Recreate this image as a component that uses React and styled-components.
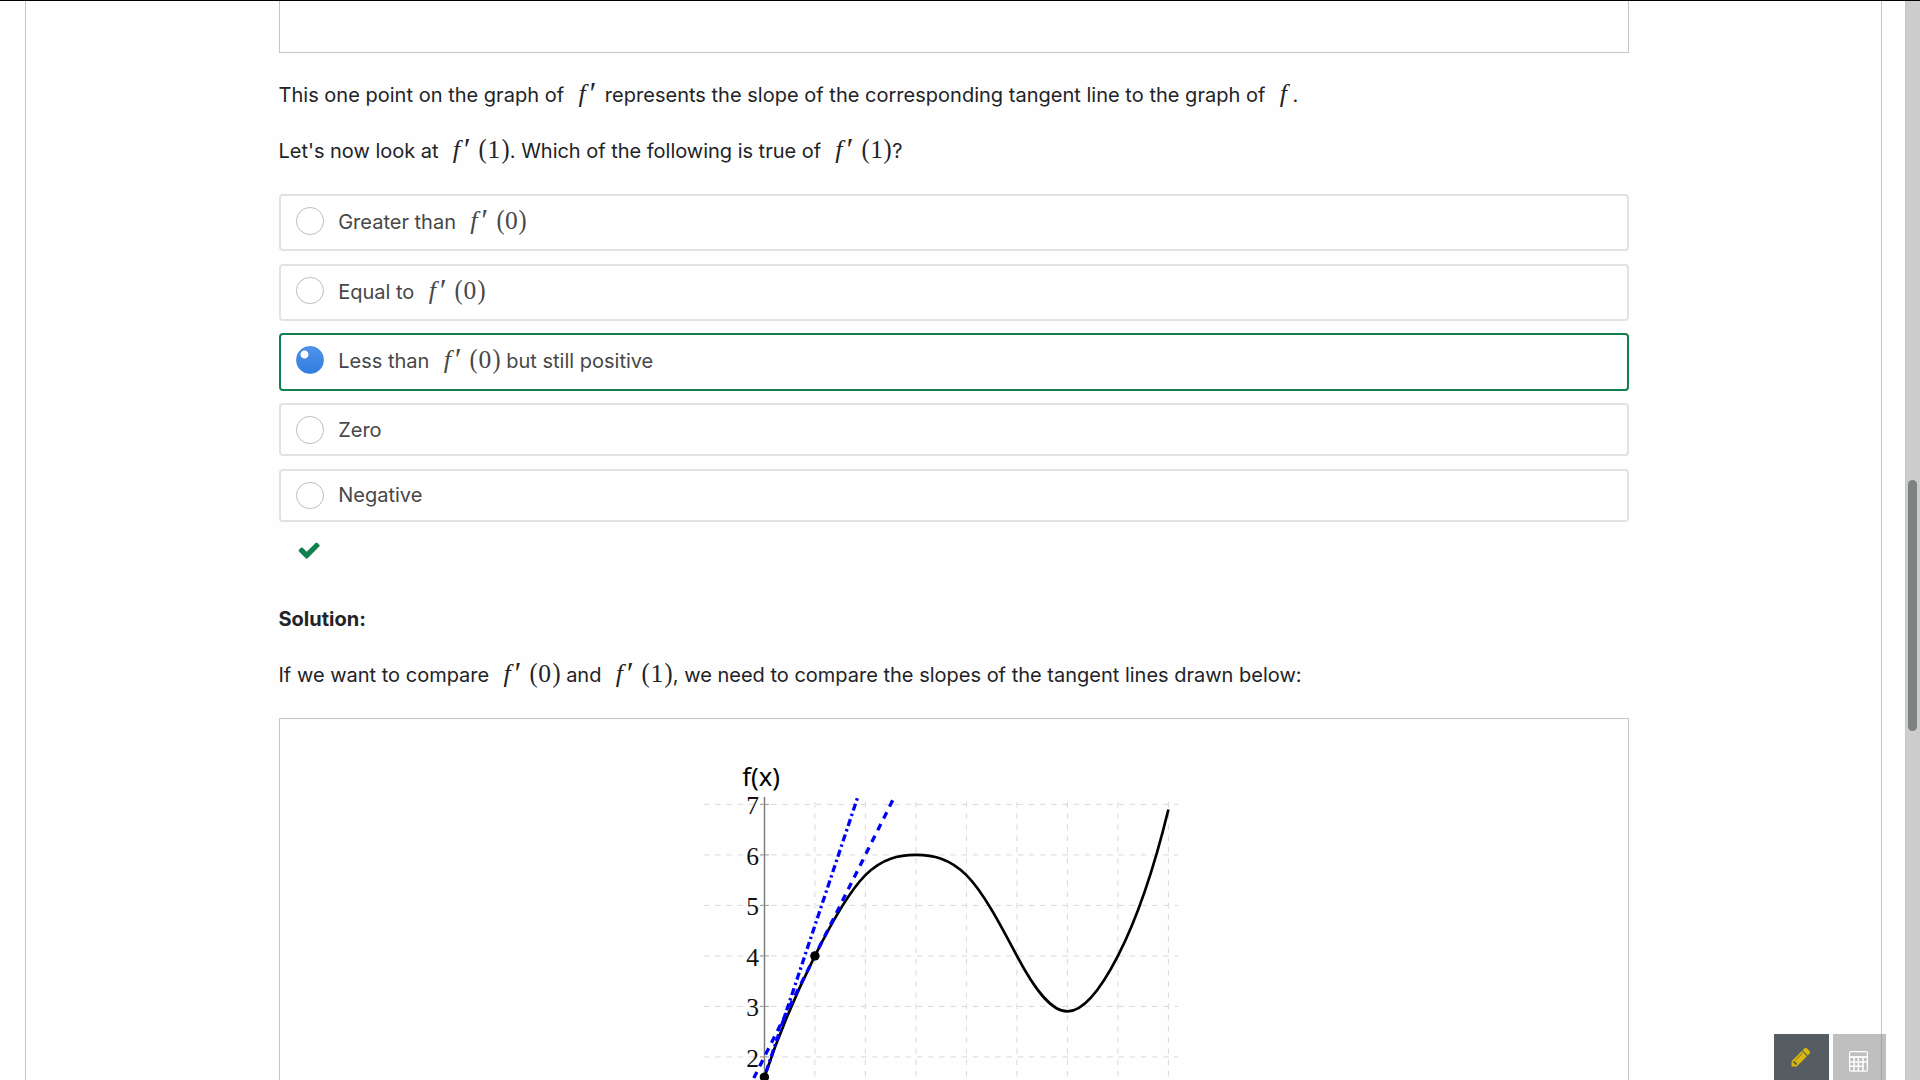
import React from "react";
import styled, { createGlobalStyle } from "styled-components";

const GlobalStyle = createGlobalStyle`
  * { box-sizing: border-box; }
  body { margin: 0; background: #fefefe; overflow: hidden; }
`;

const Page = styled.div`
  display: flex;
  height: 1080px;
  border-top: 1px solid #000;
  background: #fefefe;
  overflow: hidden;
  font-family: Inter, "Liberation Sans", sans-serif;
  font-size: 20px;
  color: #222326;
`;

const Card = styled.main`
  flex: 1;
  margin: 0 23px 0 25px;
  padding: 0 252px 0 253px;
  border: solid #c4c6c8;
  border-width: 0 1px;
`;

const Figure = styled.div`
  border: solid #c3c7ca;
  border-width: ${(p) => (p.$end ? "0 1px 1px" : "1px 1px 0")};
  height: ${(p) => p.$height}px;
  margin-top: ${(p) => p.$gap || 0}px;
`;

const Text = styled.p`
  margin: ${(p) => p.$gap}px 0 0 -0.5px;
  height: 28px;
  line-height: 28px;
  white-space: pre;
  letter-spacing: ${(p) => p.$track || 0}px;
  font-weight: ${(p) => (p.$bold ? 700 : 400)};
`;

const MathBox = styled.span`
  display: inline-flex;
  align-items: baseline;
  line-height: 0;
  letter-spacing: 0;
  font-family: "Liberation Serif", serif;
  font-size: 25.5px;
  margin-left: 5px;
`;

const Fn = styled.i`
  width: 16.5px;
  font-size: 26px;
  padding-left: 3.7px;
`;

const Prime = styled.i`
  width: 8px;
  font-size: 31px;
  transform: translate(-3.5px, 2px);
`;

const Paren = styled.span`
  width: 9px;
  margin-left: ${(p) => (p.$open ? 4.5 : 0)}px;
  font-size: 28px;
  transform: scaleX(0.87);
`;

const Digit = styled.span`
  width: 13.7px;
  text-align: center;
`;

const Options = styled.div`
  display: flex;
  flex-direction: column;
  gap: 12.33px;
  margin-top: 29px;
`;

const Option = styled.div`
  display: flex;
  align-items: flex-start;
  height: ${(p) => (p.$tall ? 57.33 : 53.33)}px;
  padding: 11px 15px;
  border: 2px solid ${(p) => (p.$selected ? "#11804f" : "#e2e2e2")};
  border-radius: 4px;
  background: #fff;
  color: #474747;
`;

const Radio = styled.span`
  width: 27.6px;
  height: 27.6px;
  margin-right: 14.6px;
  border-radius: 50%;
  border: 1px solid ${(p) => (p.$selected ? "#3f87e5" : "#bfbbb7")};
  background: ${(p) =>
    p.$selected
      ? "radial-gradient(circle at 7.5px 7.5px, #fff 0 3.7px, transparent 4.3px), linear-gradient(#4d93e8, #327de0)"
      : "#fff"};
`;

const Label = styled.span`
  line-height: 28px;
  height: 28px;
  white-space: pre;
  margin-top: ${(p) => p.$drop}px;
`;

const Feedback = styled.div`
  height: 61px;
  padding: 16px 0 0 18px;
  svg { display: block; fill: #11804f; }
`;

const Plot = styled.svg`
  display: block;
  width: 480px;
  height: 361px;
  margin-left: 420px;
`;

const Track = styled.aside`
  width: 15px;
  background: #cdcdcd;
  border-left: 1px solid #c6c6c6;
  padding: 479px 0 0 2px;
`;

const Thumb = styled.div`
  width: 9px;
  height: 251px;
  border-radius: 5px;
  background: #7e8282;
`;

const Tools = styled.div`
  position: fixed;
  left: 1774px;
  top: 1034px;
  display: flex;
  gap: 4px;
`;

const Tool = styled.button`
  width: ${(p) => p.$width}px;
  height: 46px;
  padding: ${(p) => p.$top}px 0 0 16px;
  border: 0;
  display: flex;
  align-items: flex-start;
  background: ${(p) => p.$bg};
`;

function FPrime({ arg }) {
  return (
    <MathBox>
      <Fn>f</Fn>
      <Prime>′</Prime>
      {arg !== undefined && (
        <>
          <Paren $open>(</Paren>
          <Digit>{arg}</Digit>
          <Paren>)</Paren>
        </>
      )}
    </MathBox>
  );
}

// Plot space: one unit is 50.5px on both axes.
const U = 50.5;
const px = (x) => 764.4 + x * U;
const py = (y) => 804.4 + (7 - y) * U;
const knots = [
  [0, 1.6, 3], [1, 4, 2], [2, 5.6, 1], [3, 6, 0], [4, 5.6, -1],
  [5, 4, -1.9], [6, 2.9, 0], [7, 4, 1.95], [8, 6.9, 4.1],
];
const curve = knots
  .map(([x, y, m], i) => {
    if (i === 0) return `M${px(x)} ${py(y)}`;
    const [a, b, n] = knots[i - 1];
    return `C${px(a + 1 / 3)} ${py(b + n / 3)} ${px(x - 1 / 3)} ${py(y - m / 3)} ${px(x)} ${py(y)}`;
  })
  .join(" ");

function Graph() {
  return (
    <Plot viewBox="700 719 480 361">
      <g stroke="#d9d9d9" strokeWidth="1" strokeDasharray="5.6 5.6">
        {[7, 6, 5, 4, 3, 2].map((y) => (
          <path key={y} d={`M704 ${py(y)}H1178`} />
        ))}
        {[1, 2, 3, 4, 5, 6, 7, 8].map((x) => (
          <path key={x} d={`M${px(x)} 802V1080`} />
        ))}
      </g>
      <path d="M764.5 797V1080" stroke="#777" strokeWidth="1.4" />
      <path d="M760 804.4h9M760 854.9h9M760 905.4h9M760 955.9h9M760 1006.4h9M760 1056.9h9" stroke="#999" strokeWidth="1" />
      <g fontFamily="Liberation Serif, serif" fontSize="25.5" textAnchor="end" fill="#111">
        {[7, 6, 5, 4, 3, 2].map((y) => (
          <text key={y} x="758.9" y={py(y) + 10}>{y}</text>
        ))}
      </g>
      <text x="742.3" y="786" fontFamily="Noto Sans, sans-serif" fontSize="25.6" fill="#000">f(x)</text>
      <path d={curve} fill="none" stroke="#000" strokeWidth="2.7" />
      <g stroke="#0000fa" strokeWidth="3.3" fill="none">
        <path d={`M${px(1.84)} ${py(7.12)}L${px(0)} ${py(1.6)}`} strokeDasharray="2.4 3.3 7.2 3.3" />
        <path d={`M${px(2.54)} ${py(7.08)}L${px(-0.21)} ${py(1.58)}`} strokeDasharray="7 6.2" />
      </g>
      <circle cx={px(0)} cy={py(1.6)} r="4.7" />
      <circle cx={px(1)} cy={py(4)} r="4.7" />
    </Plot>
  );
}

function Choice({ tall, selected, drop = 1, children }) {
  return (
    <Option $tall={tall} $selected={selected}>
      <Radio $selected={selected} />
      <Label $drop={drop}>{children}</Label>
    </Option>
  );
}

export default function App() {
  return (
    <>
      <GlobalStyle />
      <Page>
        <Card>
          <Figure $end $height={52} />
          <Text $gap={28} $track={0.015}>
            This one point on the graph of <FPrime /> represents the slope of the corresponding tangent line to the graph of{" "}
            <MathBox><Fn>f</Fn></MathBox>.
          </Text>
          <Text $gap={28} $track={-0.02}>
            Let's now look at <FPrime arg="1" />. Which of the following is true of <FPrime arg="1" />?
          </Text>
          <Options>
            <Choice tall>Greater than <FPrime arg="0" /></Choice>
            <Choice tall>Equal to <FPrime arg="0" /></Choice>
            <Choice tall selected>Less than <FPrime arg="0" /> but still positive</Choice>
            <Choice drop={0}>Zero</Choice>
            <Choice drop={-0.8}>Negative</Choice>
          </Options>
          <Feedback>
            <svg width="24.3" height="24.3" viewBox="0 0 1792 1792">
              <path d="M1671 566q0 40-28 68l-724 724-136 136q-28 28-68 28t-68-28l-136-136-362-362q-28-28-28-68t28-68l136-136q28-28 68-28t68 28l294 295 656-657q28-28 68-28t68 28l136 136q28 28 28 68z" />
            </svg>
          </Feedback>
          <Text $gap={22} $bold>Solution:</Text>
          <Text $gap={28}>
            If we want to compare <FPrime arg="0" /> and <FPrime arg="1" />, we need to compare the slopes of the tangent lines drawn below:
          </Text>
          <Figure $height={362} $gap={29}>
            <Graph />
          </Figure>
        </Card>
        <Track><Thumb /></Track>
      </Page>
      <Tools>
        <Tool $width={55} $top={12} $bg="#565d62">
          <svg width="22" height="22" viewBox="0 0 1792 1792" fill="#d9b80a">
            <path d="M491 1536l91-91-235-235-91 91v107h128v128h107zm523-928q0-22-22-22-10 0-17 7l-542 542q-7 7-7 17 0 22 22 22 10 0 17-7l542-542q7-7 7-17zm-54-192l416 416-832 832h-416v-416zm683 96q0 53-37 90l-166 166-416-416 166-165q36-38 90-38 53 0 91 38l235 234q37 39 37 91z" />
          </svg>
        </Tool>
        <Tool $width={53} $top={17} $bg="rgba(128,128,128,0.5)">
          <svg width="19" height="21" viewBox="0 0 19 21">
            <rect x="0.6" y="0.6" width="17.8" height="19.6" rx="1.2" fill="none" stroke="#fff" strokeWidth="1.2" />
            <path d="M1 6h17" stroke="#fff" strokeWidth="1.8" />
            <path d="M1 11h17M1 15.3h13M5 6v14M9.4 6v14M14 6v14" stroke="#fff" strokeWidth="1.5" />
          </svg>
        </Tool>
      </Tools>
    </>
  );
}
